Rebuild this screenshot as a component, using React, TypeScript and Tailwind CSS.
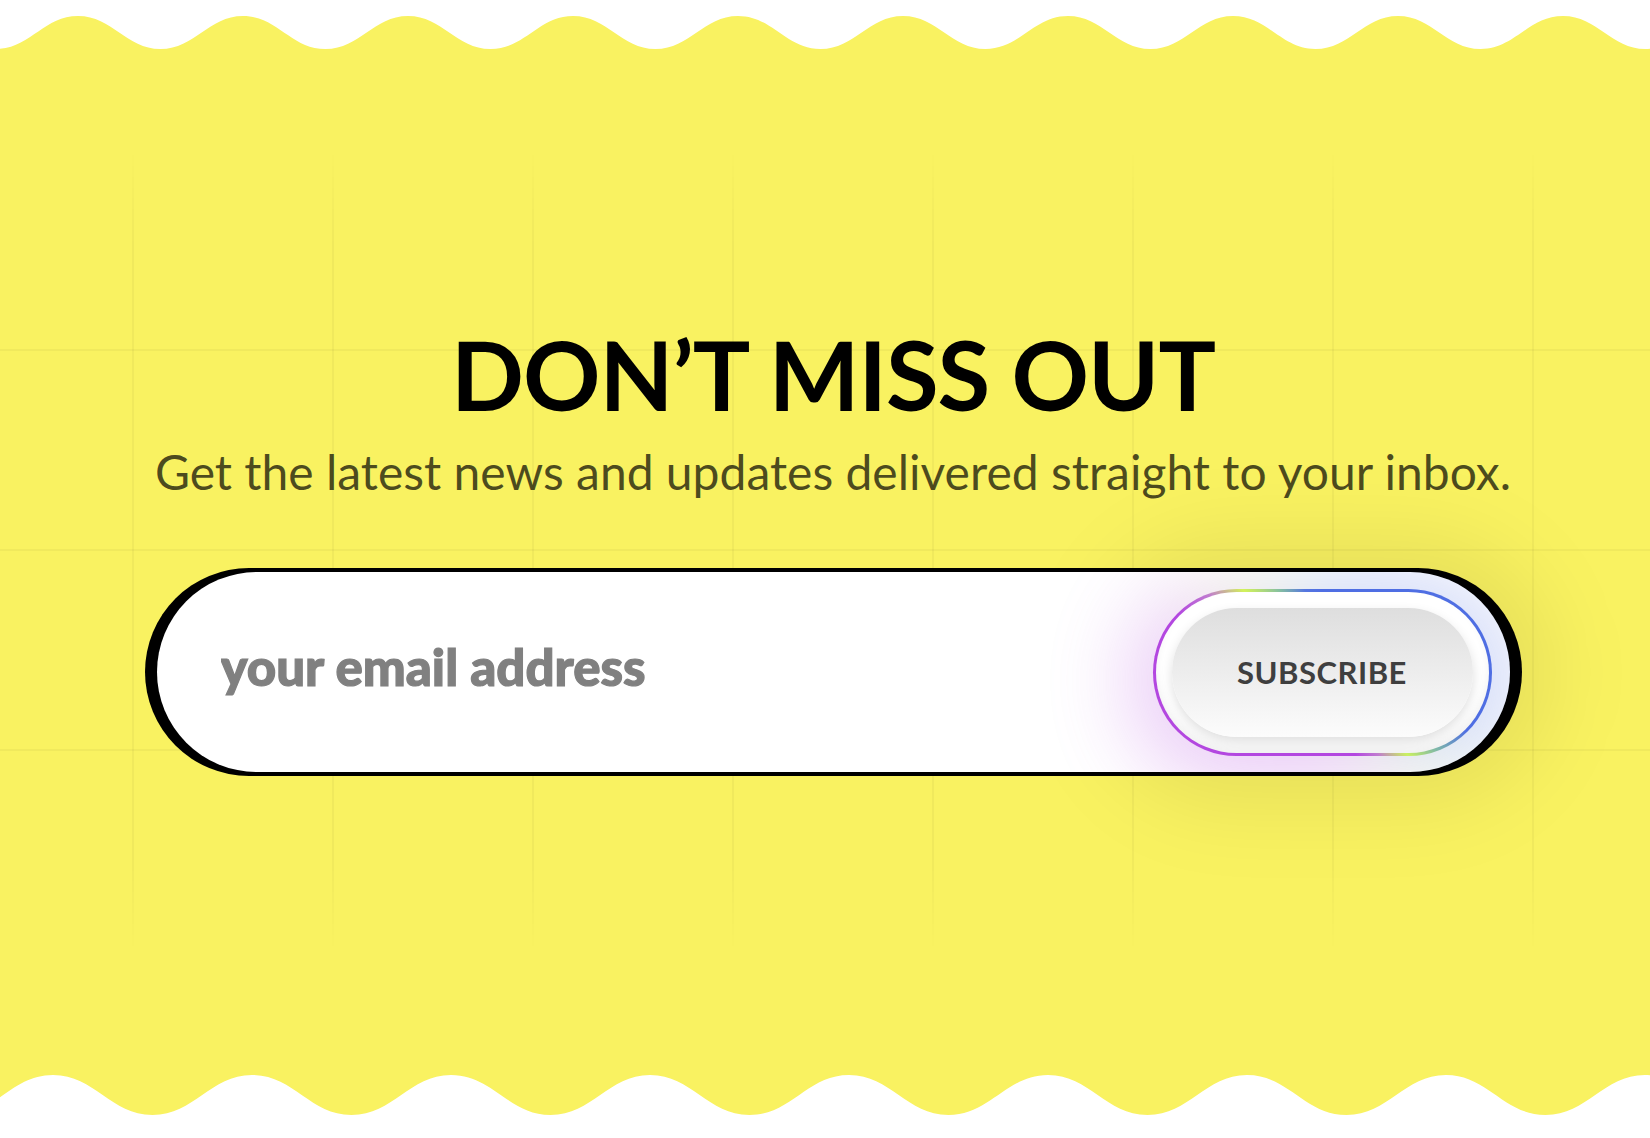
import React from "react";

// sine-ish wave built from cubic segments, starting at an extreme point
const wavePath = (period: number, startX: number, yA: number, yB: number) => {
  const half = period / 2;
  const k = half * 0.42;
  let x = startX;
  let y = yA;
  let d = `${x} ${y}`;
  while (x < 1650 + period) {
    const nx = x + half;
    const ny = y === yA ? yB : yA;
    d += ` C ${x + k} ${y} ${nx - k} ${ny} ${nx} ${ny}`;
    x = nx;
    y = ny;
  }
  return { d, endX: x };
};

const TopWave = () => {
  const start = 78 - 165;
  const w = wavePath(165, start, 16, 49);
  return (
    <svg className="block w-full h-[50px]" viewBox="0 0 1650 50" preserveAspectRatio="none">
      <path d={`M ${start} 0 L ${w.d} L ${w.endX} 0 Z`} fill="#ffffff" />
    </svg>
  );
};

const BottomWave = () => {
  const start = 53 - 199;
  const w = wavePath(199, start, 0, 40);
  return (
    <svg className="block w-full h-[63px]" viewBox="0 0 1650 63" preserveAspectRatio="none">
      <path d={`M ${start} 63 L ${w.d} L ${w.endX} 63 Z`} fill="#ffffff" />
    </svg>
  );
};

const ring =
  "bg-[conic-gradient(from_0deg,#4f6ee3_0deg,#4f6ee3_112deg,#7fb8a8_124deg,#c9f060_134deg,#c07ad0_146deg,#b347e0_158deg,#b347e0_292deg,#c07ad0_304deg,#d2f25a_316deg,#86c0a0_332deg,#5576e0_348deg,#4f6ee3_360deg)]";

export default function App() {
  return (
    <div className="w-[1650px] h-[1138px] bg-[#f9f261] overflow-hidden flex flex-col font-['Lato',sans-serif]">
      <TopWave />

      <section className="relative flex-1 flex flex-col items-center pl-4 pt-[276px]">
        {/* faint grid */}
        <div className="pointer-events-none absolute left-0 right-0 top-[100px] h-[801px] bg-[linear-gradient(to_right,rgba(0,0,0,0.035)_2px,transparent_2px),linear-gradient(to_bottom,rgba(0,0,0,0.035)_2px,transparent_2px)] bg-[size:200px_200px] bg-[position:132px_-1px] [mask-image:linear-gradient(to_bottom,transparent,black_12%,black_88%,transparent)]" />

        <h1 className="relative text-[96px] leading-none font-bold text-black tracking-[-1px]">
          DON’T MISS OUT
        </h1>
        <p className="relative mt-[26px] text-[48px] leading-none text-black/70">
          Get the latest news and updates delivered straight to your inbox.
        </p>

        <div className="relative mt-[72px]">
          <div className="absolute right-[-31px] top-[-31px] w-[460px] h-[270px] rounded-full bg-black/[0.07] blur-[40px]" />
          <div className="relative w-[1377px] h-[208px] rounded-full bg-black px-3 py-1">
            <div className="relative h-full rounded-full bg-white overflow-hidden flex items-center pl-[64px] pr-[18px]">
              <input
                type="email"
                placeholder="your email address"
                className="relative flex-1 min-w-0 mb-[10px] bg-transparent outline-none text-[51px] font-black tracking-[0px] [-webkit-text-stroke:1.2px_#808080] text-[#808080] placeholder:text-[#808080]"
              />
              <div className="relative">
                <div className={`absolute -inset-7 translate-y-2 rounded-full ${ring} opacity-25 blur-2xl`} />
                <button
                  type="button"
                  className={`relative w-[339px] h-[167px] rounded-full p-[3px] ${ring}`}
                >
                  <div className="h-full rounded-full bg-white p-4 shadow-[inset_0_-6px_10px_rgba(0,0,0,0.06)]">
                    <div className="h-full rounded-full bg-gradient-to-b from-[#dedede] to-[#fcfcfc] shadow-[0_5px_12px_rgba(0,0,0,0.13)] flex items-center justify-center">
                      <span className="text-[31px] font-bold text-[#3f3f3f] tracking-[0.5px]">SUBSCRIBE</span>
                    </div>
                  </div>
                </button>
              </div>
            </div>
          </div>
        </div>
      </section>

      <BottomWave />
    </div>
  );
}
